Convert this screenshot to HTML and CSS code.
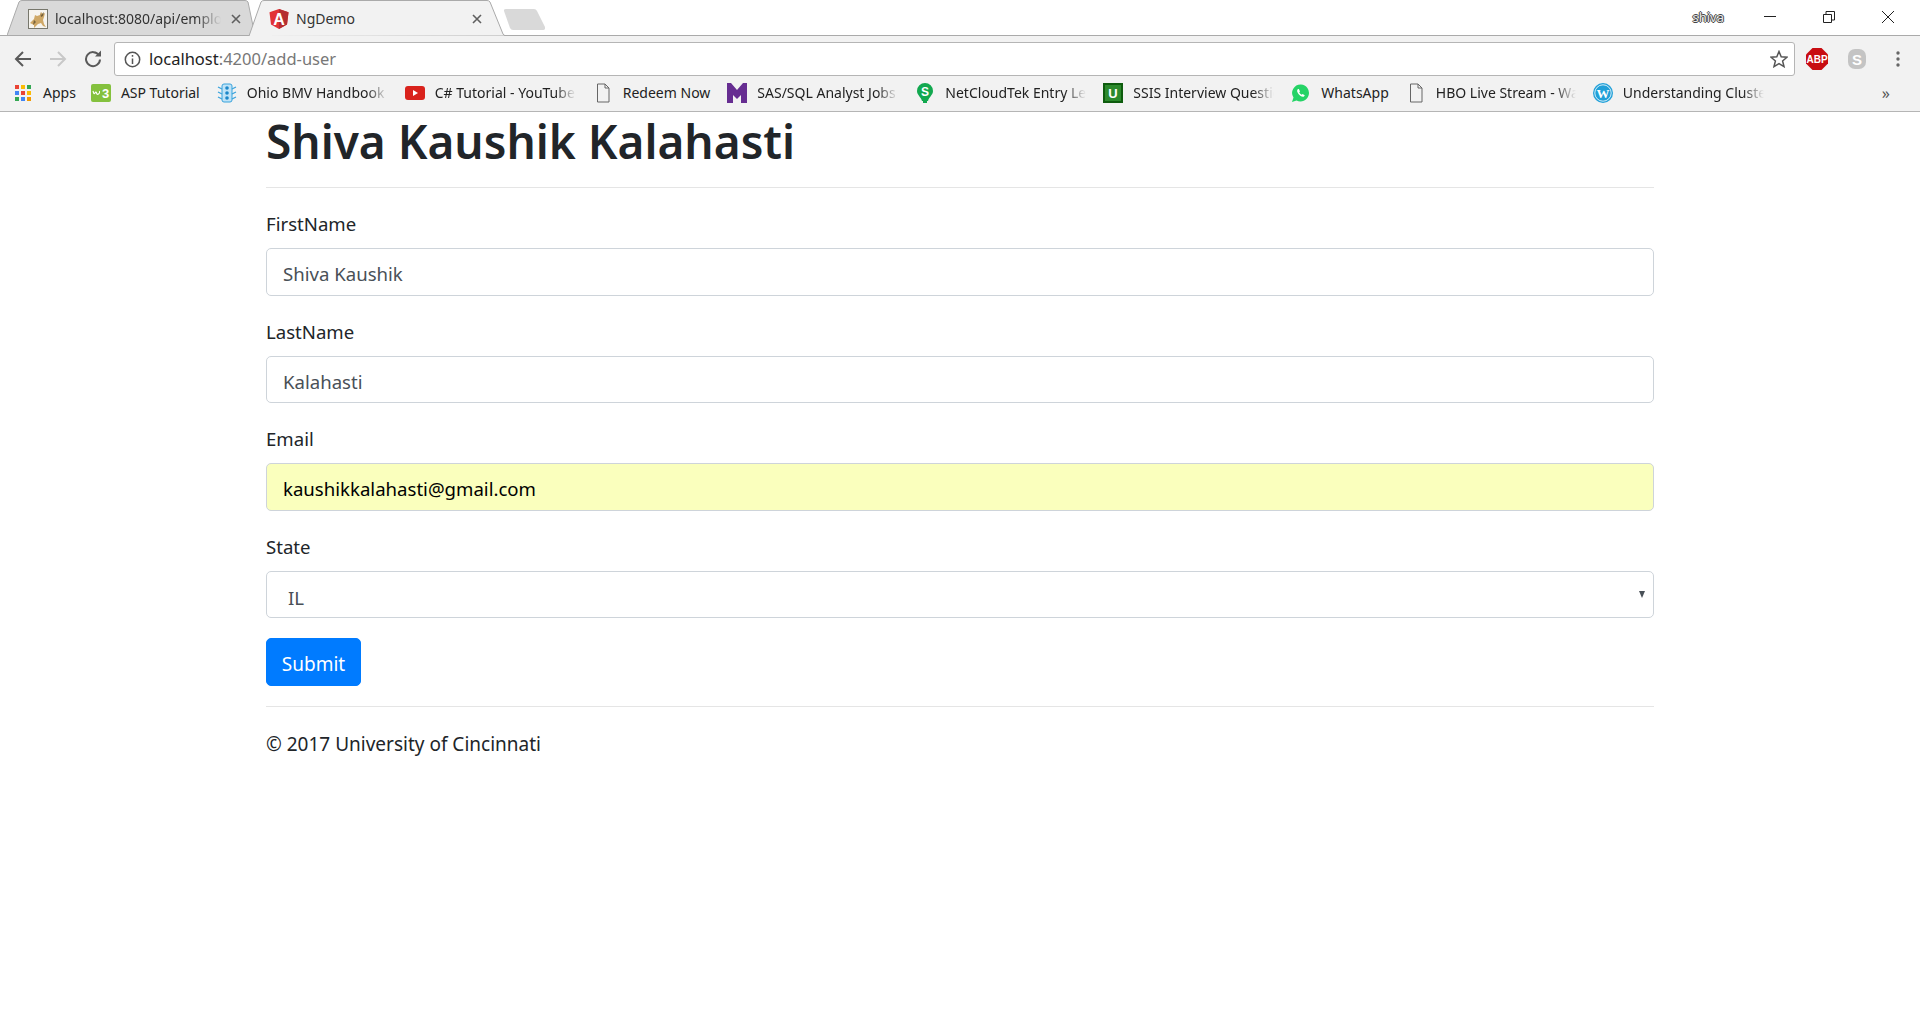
FILE: index.html
```html
<!DOCTYPE html>
<html lang="en">
<head>
    <meta charset="UTF-8">
    <meta name="viewport" content="width=device-width, initial-scale=1.0">
    <title>NgDemo</title>
    <link rel="stylesheet" href="styles.css">
</head>
<body>
    <!-- Browser frame -->
    <header class="browser">
        <div class="tabstrip">
            <div class="tab tab-back">
                <svg class="tab-shape" viewBox="0 0 248 36" preserveAspectRatio="none"><path d="M0 35.5 L12 2 Q13 .5 15 .5 H238 Q240 .5 241 2 L248 35.5Z" fill="#d9d9d9" stroke="#aaa"/></svg>
                <svg class="favicon" viewBox="0 0 20 20"><rect x=".5" y=".5" width="19" height="19" fill="#f6f4ee" stroke="#77776c"/><path d="M2 14l4-4 1-4 2 1 3-1 1-3 2 2 2-1-1 4-1 3 1 4 2 3-3-1-2-3-3 1-3 3-1 1 0-3z" fill="#cfa866"/><path d="M12 3l1 3 3-3-1 4-2 1zM6 11l2 2-3 3z" fill="#77623a"/></svg>
                <span class="tab-title tab-title-fade">localhost:8080/api/employees</span>
                <svg class="tab-close tab-close-back" viewBox="0 0 10 10"><path d="M1 1l8 8M9 1l-8 8"/></svg>
            </div>
            <div class="tab tab-active">
                <svg class="tab-shape" viewBox="0 0 256 36" preserveAspectRatio="none"><path d="M0 36 L12 2 Q13 .5 15 .5 H238 Q240 .5 241 2 L254 34 Q255 35.500 256 35.500" fill="#f2f2f2" stroke="#aaa"/></svg>
                <svg class="favicon" viewBox="0 0 20 20"><polygon points="10,0 19.500,3.300 18,15.600 10,20 2,15.600 .5,3.300" fill="#e23237"/><polygon points="10,0 19.500,3.300 18,15.600 10,20" fill="#b52e31"/><text x="10" y="15.500" class="favicon-letter angular-letter" font-size="16">A</text></svg>
                <span class="tab-title">NgDemo</span>
                <svg class="tab-close" viewBox="0 0 10 10"><path d="M1 1l8 8M9 1l-8 8"/></svg>
            </div>
            <svg class="new-tab" viewBox="0 0 42 21"><path d="M1 2 Q.5 0 3 0H31Q33 0 34 2L42 18Q42.500 21 40 21H10Q8 21 7 19Z" fill="#d9d9d9"/></svg>
            <div class="window-controls">
                <span class="profile-name">shiva</span>
                <svg class="win-btn win-min" viewBox="0 0 12 12"><path d="M0 5.500H12"/></svg>
                <svg class="win-btn" viewBox="0 0 12 12"><path d="M.5 3.500H8.500V11.500H.5ZM3 3.500V.5H11.500V9H8.500"/></svg>
                <svg class="win-btn" viewBox="0 0 12 12"><path d="M0 0L12 12M12 0L0 12"/></svg>
            </div>
        </div>

        <div class="toolbar">
            <svg class="nav-icon" viewBox="0 0 18 18"><path d="M17 9H2M9 2L2 9l7 7"/></svg>
            <svg class="nav-icon nav-disabled" viewBox="0 0 18 18"><path d="M1 9H16M9 2l7 7-7 7"/></svg>
            <svg class="nav-icon" viewBox="0 0 18 18"><path d="M15 5.500A7 7 0 1 0 16 9.500"/><path class="nav-fill" d="M11 6.500H17V.5Z"/></svg>
            <div class="address-bar">
                <svg class="info-icon" viewBox="0 0 17 17"><circle cx="8.500" cy="8.500" r="7.200"/><path d="M8.500 7.500V13M8.500 4V5.800"/></svg>
                <span class="url">localhost<span class="url-path">:4200/add-user</span></span>
                <svg class="star-icon" viewBox="0 0 18 18"><polygon points="9,1.500 11.200,6.800 17,7.200 12.600,11 14,16.600 9,13.600 4,16.600 5.400,11 1,7.200 6.800,6.800"/></svg>
            </div>
            <svg class="ext-icon" viewBox="0 0 22 22"><polygon points="6.500,0 15.500,0 22,6.500 22,15.500 15.500,22 6.500,22 0,15.500 0,6.500" fill="#c80d12"/><text x="11" y="15" class="ext-label" font-size="10">ABP</text></svg>
            <svg class="ext-icon ext-skype" viewBox="0 0 20 22"><rect x="1" y="1" width="18" height="20" rx="7" fill="#c4c4c4"/><text x="10" y="16.500" class="ext-label" font-size="15">S</text></svg>
            <svg class="menu-dots" viewBox="0 0 4 16"><circle cx="2" cy="2" r="1.700"/><circle cx="2" cy="8" r="1.700"/><circle cx="2" cy="14" r="1.700"/></svg>
        </div>

        <nav class="bookmarks">
            <a class="bookmark bookmark-apps">
                <svg class="bm-icon" viewBox="0 0 20 20"><g><rect x="2" y="2" width="4" height="4" fill="#ea4335"/><rect x="8" y="2" width="4" height="4" fill="#fbbc05"/><rect x="14" y="2" width="4" height="4" fill="#34a853"/><rect x="2" y="8" width="4" height="4" fill="#4285f4"/><rect x="8" y="8" width="4" height="4" fill="#ea4335"/><rect x="14" y="8" width="4" height="4" fill="#fbbc05"/><rect x="2" y="14" width="4" height="4" fill="#34a853"/><rect x="8" y="14" width="4" height="4" fill="#4285f4"/><rect x="14" y="14" width="4" height="4" fill="#f29900"/></g></svg>
                <span>Apps</span>
            </a>
            <a class="bookmark">
                <svg class="bm-icon" viewBox="0 0 20 20"><rect y="1" width="20" height="18" rx="2" fill="#84c13e"/><text x="14.500" y="15" class="favicon-letter" font-size="13">3</text><path d="M2 8q1 4 2 2t1.500 0 2 1 1-3" stroke="#fff" stroke-width="1.100" fill="none"/></svg>
                <span>ASP Tutorial</span>
            </a>
            <a class="bookmark">
                <svg class="bm-icon" viewBox="0 0 20 20"><rect x="5" y="1" width="10" height="18" rx="2" fill="#bfe3f7" stroke="#39a3dc"/><path d="M1 4l4 2M1 9l4 2M1 14l4 2M19 4l-4 2M19 9l-4 2M19 14l-4 2" stroke="#39a3dc" stroke-width="1.300"/><circle cx="10" cy="5" r="1.800" fill="#1b87c9"/><circle cx="10" cy="10" r="1.800" fill="#1b87c9"/><circle cx="10" cy="15" r="1.800" fill="#1b87c9"/></svg>
                <span class="bm-fade">Ohio BMV Handbook 2017</span>
            </a>
            <a class="bookmark">
                <svg class="bm-icon" viewBox="0 0 20 20"><rect y="3" width="20" height="14" rx="3" fill="#d9221c"/><polygon points="8,7 8,13 13,10" fill="#fff"/></svg>
                <span class="bm-fade">C# Tutorial - YouTube Playlist</span>
            </a>
            <a class="bookmark">
                <svg class="bm-icon file-icon" viewBox="0 0 20 20"><path d="M4.500 1H12L16 5V19H4.500ZM12 1V5H16"/></svg>
                <span>Redeem Now</span>
            </a>
            <a class="bookmark">
                <svg class="bm-icon" viewBox="0 0 20 20"><polygon points="0,0 4,0 10,7 16,0 20,0 20,20 14,20 14,12 10,16 6,12 6,20 0,20" fill="#662d91"/></svg>
                <span class="bm-fade">SAS/SQL Analyst Jobs Ohio</span>
            </a>
            <a class="bookmark">
                <svg class="bm-icon" viewBox="0 0 20 20"><path d="M10 0A8 8 0 0 1 18 8C18 12 14 14 13 18H7C6 14 2 12 2 8A8 8 0 0 1 10 0Z" fill="#12a84f"/><rect x="8" y="18" width="4" height="2" fill="#12a84f"/><text x="10" y="12.500" class="favicon-letter" font-size="12">S</text></svg>
                <span class="bm-fade">NetCloudTek Entry Level Jobs</span>
            </a>
            <a class="bookmark">
                <svg class="bm-icon" viewBox="0 0 20 20"><rect width="20" height="20" fill="#0e5c0e"/><rect x="2" y="2" width="16" height="16" fill="#2c8a2c"/><text x="10" y="15" class="favicon-letter" font-size="13">U</text></svg>
                <span class="bm-fade">SSIS Interview Questions</span>
            </a>
            <a class="bookmark">
                <svg class="bm-icon" viewBox="0 0 20 20"><path d="M10 1.500A8.500 8.500 0 1 1 5.500 17.500L1 19l1.500-4.400A8.500 8.500 0 0 1 10 1.500Z" fill="#25d366"/><path d="M7 6c-1.500 1-1 3 .5 5s4 3.500 5.500 2.500l.8-1.300-2.200-1.200-.9.800c-1-.4-2-1.500-2.500-2.500l.8-.9L7.900 6z" fill="#fff"/></svg>
                <span>WhatsApp</span>
            </a>
            <a class="bookmark">
                <svg class="bm-icon file-icon" viewBox="0 0 20 20"><path d="M4.500 1H12L16 5V19H4.500ZM12 1V5H16"/></svg>
                <span class="bm-fade bm-fade-short">HBO Live Stream - Watch Now</span>
            </a>
            <a class="bookmark">
                <svg class="bm-icon" viewBox="0 0 20 20"><circle cx="10" cy="10" r="10" fill="#21a0d8"/><circle cx="10" cy="10" r="8.200" fill="none" stroke="#fff" stroke-width=".8"/><text x="10" y="14.500" class="wp-letter" font-size="13">W</text></svg>
                <span class="bm-fade">Understanding Clusters in SSIS</span>
            </a>
            <span class="bm-more">»</span>
        </nav>
    </header>

    <!-- Page -->
    <div class="container">
        <h1 class="page-title">Shiva Kaushik Kalahasti</h1>
        <form class="user-form">
            <div class="form-group">
                <label for="firstName">FirstName</label>
                <input type="text" id="firstName" class="form-control" value="Shiva Kaushik">
            </div>
            <div class="form-group">
                <label for="lastName">LastName</label>
                <input type="text" id="lastName" class="form-control" value="Kalahasti">
            </div>
            <div class="form-group">
                <label for="email">Email</label>
                <input type="text" id="email" class="form-control form-control-filled" value="kaushikkalahasti@gmail.com">
            </div>
            <div class="form-group">
                <label for="state">State</label>
                <div class="select-wrap">
                    <select id="state" class="form-control form-select">
                        <option>IL</option>
                    </select>
                </div>
            </div>
            <button type="submit" class="btn-submit">Submit</button>
        </form>
        <footer class="page-footer">© 2017 University of Cincinnati</footer>
    </div>
</body>
</html>
```

FILE: styles.css
```css
html, body {
    margin: 0;
    height: 100%;
    background-color: white;
    color: #212529;
    font-family: "Noto Sans", Arial, sans-serif;
}

/* Browser frame */
.browser {
    height: 112px;
    background-color: #f2f2f2;
    border-bottom: 1px solid #b5b5b5;
    box-sizing: border-box;
}

.tabstrip {
    position: relative;
    display: flex;
    height: 36px;
    padding-left: 7px;
    background-color: white;
    box-shadow: inset 0 -1px 0 #aaa;
}

.tab {
    position: relative;
    display: flex;
    align-items: center;
    box-sizing: border-box;
    height: 36px;
    padding-top: 1px;
    font-size: 14px;
    color: #333;
}

.tab-back {
    width: 248px;
    padding-left: 21px;
}

.tab-active {
    width: 256px;
    margin-left: -6px;
    padding-left: 20px;
}

.tab-shape {
    position: absolute;
    left: 0;
    top: 0;
    width: 100%;
    height: 100%;
}

.favicon {
    position: relative;
    width: 20px;
    height: 20px;
    flex: none;
}

.angular-letter {
    font-weight: normal;
}

.tab-title {
    position: relative;
    flex: 1;
    margin-left: 7px;
    overflow: hidden;
    white-space: nowrap;
}

.tab-title-fade {
    -webkit-mask-image: linear-gradient(to right, black 85%, transparent);
    mask-image: linear-gradient(to right, black 85%, transparent);
}

.tab-close {
    position: relative;
    flex: none;
    width: 10px;
    height: 10px;
    margin: 0 23px 0 10px;
    fill: none;
    stroke: #5f5f5f;
    stroke-width: 1.6;
}

.tab-close-back {
    margin-right: 14px;
}

.new-tab {
    width: 42px;
    height: 21px;
    margin: 9px 0 0 -2px;
    flex: none;
}

.window-controls {
    display: flex;
    align-items: center;
    gap: 47px;
    margin-left: auto;
    height: 33px;
    padding-right: 26px;
}

.profile-name {
    margin-right: -7px;
    font-size: 13px;
    color: #e8e8e8;
    text-shadow: -1px 0 #444, 1px 0 #444, 0 -1px #444, 0 1px #444;
}

.win-btn {
    width: 12px;
    height: 12px;
    fill: none;
    stroke: #222;
    stroke-width: 1;
}

.toolbar {
    display: flex;
    align-items: center;
    box-sizing: border-box;
    height: 40px;
    padding: 6px 20px 0 14px;
}

.nav-icon {
    flex: none;
    width: 18px;
    height: 18px;
    margin-right: 17px;
    fill: none;
    stroke: #5a5a5a;
    stroke-width: 2;
}

.nav-disabled {
    stroke: #c8c8c8;
}

.nav-fill {
    fill: #5a5a5a;
    stroke: none;
}

.address-bar {
    flex: 1;
    display: flex;
    align-items: center;
    box-sizing: border-box;
    height: 34px;
    margin: 0 11px 0 -5px;
    padding: 0 6px 0 9px;
    background-color: white;
    border: 1px solid #b5b5b5;
    border-radius: 3px;
}

.info-icon {
    width: 17px;
    height: 17px;
    fill: none;
    stroke: #555;
    stroke-width: 1.5;
}

.url {
    flex: 1;
    margin-left: 8px;
    padding-bottom: 2px;
    font-size: 16.5px;
    color: #222;
}

.url-path {
    color: #777;
}

.star-icon {
    width: 18px;
    height: 18px;
    fill: none;
    stroke: #555;
    stroke-width: 1.5;
}

.ext-icon {
    flex: none;
    width: 22px;
    height: 22px;
}

.ext-skype {
    width: 20px;
    margin-left: 19px;
}

.ext-label {
    fill: white;
    font-family: "Liberation Sans", sans-serif;
    font-weight: bold;
    text-anchor: middle;
}

.menu-dots {
    flex: none;
    width: 4px;
    height: 16px;
    margin-left: 29px;
    fill: #666;
}

.bookmarks {
    display: flex;
    align-items: center;
    gap: 17px;
    height: 33px;
    padding-left: 13px;
    font-size: 14px;
    color: #222;
    white-space: nowrap;
}

.bookmark {
    display: flex;
    align-items: center;
    gap: 10px;
}

.bookmark-apps {
    margin-right: -2px;
}

.bm-icon {
    flex: none;
    width: 20px;
    height: 20px;
}

.favicon-letter {
    fill: white;
    font-family: "Liberation Sans", sans-serif;
    font-weight: bold;
    text-anchor: middle;
}

.wp-letter {
    fill: white;
    font-family: "Liberation Serif", serif;
    font-weight: bold;
    text-anchor: middle;
}

.file-icon {
    fill: none;
    stroke: #666;
    stroke-width: 1;
}

.bm-fade {
    width: 141px;
    overflow: hidden;
    -webkit-mask-image: linear-gradient(to right, black 85%, transparent);
    mask-image: linear-gradient(to right, black 85%, transparent);
}

.bm-fade-short {
    width: 140px;
}

.bm-more {
    margin-left: auto;
    margin-right: 30px;
    font-size: 16px;
    color: #555;
}

/* Page */
.container {
    width: 1388px;
    margin: 0 auto;
}

.page-title {
    margin: 0;
    padding-bottom: 15px;
    height: 60px;
    border-bottom: 1px solid rgba(0, 0, 0, 0.1);
    font-size: 46px;
    font-weight: 600;
    line-height: 58px;
    box-sizing: content-box;
}

.user-form {
    padding-top: 20px;
}

.form-group {
    margin-bottom: 20px;
}

label {
    display: block;
    height: 30px;
    margin-bottom: 10px;
    font-size: 18.6px;
    line-height: 32px;
}

.form-control {
    display: block;
    box-sizing: border-box;
    width: 100%;
    height: 47.5px;
    padding: 4px 15px 0 16px;
    font-family: inherit;
    font-size: 18.6px;
    color: #495057;
    background-color: white;
    border: 1px solid #ced4da;
    border-radius: 5px;
}

.form-control-filled {
    color: black;
    background-color: #faffbd;
}

.select-wrap {
    position: relative;
}

.select-wrap::after {
    content: "";
    position: absolute;
    right: 9px;
    top: 20px;
    border-left: 3.5px solid transparent;
    border-right: 3.5px solid transparent;
    border-top: 7px solid #495057;
}

.form-select {
    padding: 7px 20px 0 21px;
    -webkit-appearance: none;
    appearance: none;
}

.btn-submit {
    display: block;
    box-sizing: border-box;
    width: 95px;
    height: 47.5px;
    padding: 4px 0 0;
    font-family: inherit;
    font-size: 19px;
    color: white;
    background-color: #007bff;
    border: 1px solid #007bff;
    border-radius: 5px;
}

.page-footer {
    margin-top: 20px;
    padding-top: 22px;
    border-top: 1px solid rgba(0, 0, 0, 0.1);
    font-size: 19px;
    line-height: 30px;
}
```
